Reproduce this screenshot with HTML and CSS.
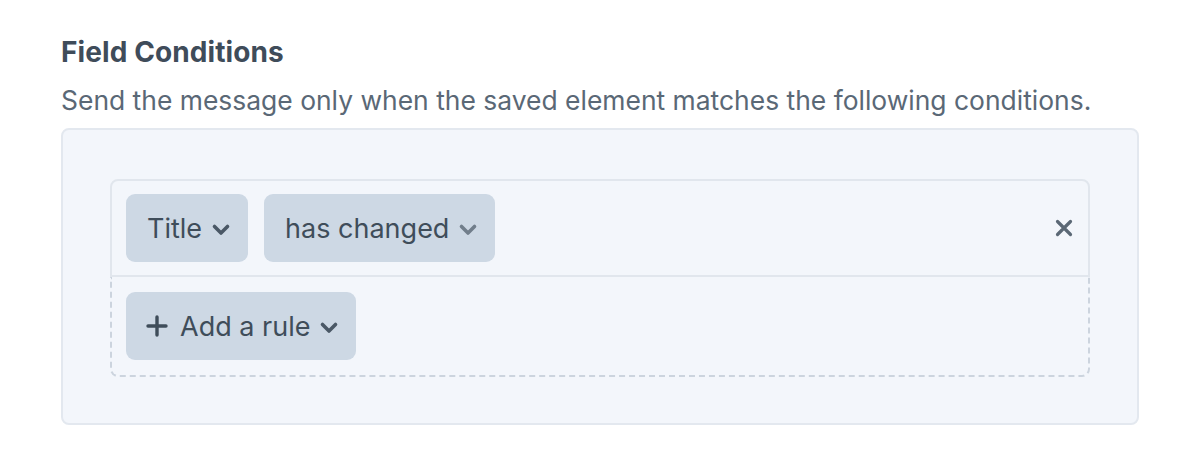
FILE: index.html
```html
<!DOCTYPE html>
<html>
<head>
<meta charset="utf-8">
<link rel="stylesheet" href="styles.css">
</head>
<body>
<div class="field">
  <div class="heading">Field Conditions</div>
  <div class="instructions">Send the message only when the saved element matches the following conditions.</div>
  <div class="condition-box">
    <div class="rules">
      <div class="rule">
        <div class="rule-body">
          <button class="pill">Title <svg class="chev" viewBox="0 0 20 14" width="20" height="14"><path d="M3.5 3.5 L10 10 L16.5 3.5" fill="none" stroke="currentColor" stroke-width="3.6" stroke-linecap="round" stroke-linejoin="round"/></svg></button>
          <button class="pill">has changed <svg class="chev light" viewBox="0 0 20 14" width="20" height="14"><path d="M3.5 3.5 L10 10 L16.5 3.5" fill="none" stroke="currentColor" stroke-width="3.6" stroke-linecap="round" stroke-linejoin="round"/></svg></button>
        </div>
        <button class="remove" aria-label="Remove"><svg viewBox="0 0 18 18" width="18" height="18"><path d="M2.5 2.5 L15.5 15.5 M15.5 2.5 L2.5 15.5" fill="none" stroke="currentColor" stroke-width="3.2" stroke-linecap="round"/></svg></button>
      </div>
      <div class="add-row">
        <button class="pill add"><svg class="plus" viewBox="0 0 22 22" width="22" height="22"><path d="M11 2 V20 M2 11 H20" fill="none" stroke="currentColor" stroke-width="3.4" stroke-linecap="round"/></svg>Add a rule <svg class="chev" viewBox="0 0 20 14" width="20" height="14"><path d="M3.5 3.5 L10 10 L16.5 3.5" fill="none" stroke="currentColor" stroke-width="3.6" stroke-linecap="round" stroke-linejoin="round"/></svg></button>
      </div>
    </div>
  </div>
</div>
</body>
</html>
```

FILE: styles.css
```css
html, body {
  margin: 0;
  padding: 0;
  background: #ffffff;
}
body {
  font-family: Inter, "Noto Sans", sans-serif;
  color: #3f4d5a;
}
.field {
  padding: 36px 61px 0 61px;
  width: 1078px;
}
.heading {
  font-size: 28px;
  font-weight: 700;
  line-height: 32px;
  color: #3f4c5a;
  letter-spacing: 0.1px;
}
.instructions {
  margin-top: 15px;
  font-size: 26.45px;
  line-height: 34px;
  color: #5a6876;
}
.condition-box {
  margin-top: 11px;
  background: #f3f6fb;
  border: 2px solid #e3e8ef;
  border-radius: 8px;
  padding: 49px 47px 46px 47px;
}
.rules {
  display: flex;
  flex-direction: column;
}
.rule {
  display: flex;
  align-items: center;
  justify-content: space-between;
  border: 2px solid #e1e6ed;
  border-radius: 8px 8px 0 0;
  padding: 13px 15px 13px 14px;
}
.rule-body {
  display: flex;
  gap: 16px;
}
.pill {
  display: inline-flex;
  align-items: center;
  gap: 9px;
  height: 68px;
  padding: 0 17px 0 21px;
  border: none;
  border-radius: 9px;
  background: #cdd8e4;
  color: #3f4d5a;
  font-family: Inter, "Noto Sans", sans-serif;
  font-size: 27px;
  line-height: 1;
}
.chev {
  width: 20px;
  height: 14px;
  color: #4a5866;
  margin-top: 3px;
}
.chev.light {
  color: #717e8b;
}
.remove {
  border: none;
  background: transparent;
  padding: 0;
  width: 18px;
  height: 18px;
  color: #5b6875;
  display: flex;
}
.add-row {
  border: 2px dashed #ccd4de;
  border-top: none;
  border-radius: 0 0 8px 8px;
  padding: 15px 14px 15px 14px;
}
.pill.add {
  gap: 0;
  padding-left: 20px;
}
.plus {
  color: #3f4d5a;
  margin-right: 12px;
}
.pill.add .chev {
  margin-left: 9px;
}
```
